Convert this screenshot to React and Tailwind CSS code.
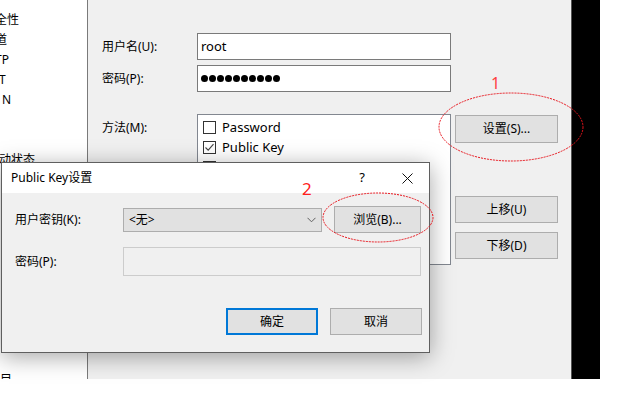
import React from 'react';

const font = "font-['Noto_Sans','Noto_Sans_CJK_SC',sans-serif]";

const Btn = ({ children, className = '' }) => (
    <div className={`flex items-center justify-center border border-[#adadad] bg-[#e1e1e1] text-[12px] text-black ${className}`}>
        {children}
    </div>
);

const Check = ({ checked, label }) => (
    <div className="flex h-[20px] items-center gap-[6px]">
        <div className="relative h-[13px] w-[13px] border border-[#333] bg-white">
            {checked && (
                <svg className="absolute left-[1px] top-[1px]" width="9" height="9" viewBox="0 0 9 9">
                    <path d="M0.5 4.5 L3.2 7.2 L8.5 1.2" fill="none" stroke="#444" strokeWidth="1.1" />
                </svg>
            )}
        </div>
        <span className="text-[13px] leading-none">{label}</span>
    </div>
);

// Left tree: only the clipped tails are visible
const TreePanel = () => (
    <div className="relative h-full w-[88px] overflow-hidden border-r border-[#7a7a7a] bg-white text-[12px]">
        <div className="flex flex-col pt-[10px] leading-[20px]">
            <span className="-ml-[17px] whitespace-nowrap">安全性</span>
            <span className="-ml-[17px] whitespace-nowrap">隧道</span>
            <span className="-ml-[5px] whitespace-nowrap">TP</span>
            <span className="-ml-[1px] whitespace-nowrap">T</span>
            <span className="ml-[2px] whitespace-nowrap">N</span>
            <span className="h-[20px]" />
            <span className="h-[20px]" />
            <span className="-ml-[1px] whitespace-nowrap">动状态</span>
        </div>
        <span className="absolute left-0 top-[373px] whitespace-nowrap text-[12px] leading-[14px]">目</span>
    </div>
);

const MainForm = () => (
    <div className="relative h-full w-[483px] bg-[#f0f0f0] pl-[14px] pt-[33px]">
        <div className="flex items-center">
            <span className="w-[95px] text-[12px]">用户名(U):</span>
            <div className="flex h-[27px] w-[254px] items-center border border-[#7a7a7a] bg-white pl-[3px] text-[13px]">root</div>
        </div>
        <div className="mt-[5px] flex items-center">
            <span className="w-[95px] text-[12px]">密码(P):</span>
            <div className="flex h-[27px] w-[254px] items-center gap-[1px] border border-[#7a7a7a] bg-white pl-[3px]">
                {Array.from({ length: 10 }).map((_, i) => (
                    <span key={i} className="h-[7px] w-[7px] rounded-full bg-black" />
                ))}
            </div>
        </div>
        <div className="mt-[22px] flex items-start">
            <span className="mt-[5px] w-[95px] text-[12px]">方法(M):</span>
            <div className="h-[151px] w-[254px] border border-[#828790] bg-white pl-[5px] pt-[2px]">
                <Check label="Password" />
                <Check checked label="Public Key" />
                <Check label="Keyboard Interactive" />
            </div>
            <div className="ml-[4px] flex flex-col">
                <Btn className="mt-[1px] h-[28px] w-[103px]">设置(S)...</Btn>
                <Btn className="mt-[53px] h-[27px] w-[103px]">上移(U)</Btn>
                <Btn className="mt-[9px] h-[27px] w-[103px]">下移(D)</Btn>
            </div>
        </div>
    </div>
);

const Dialog = () => (
    <div className="absolute left-[1px] top-[162px] flex h-[191px] w-[429px] flex-col border border-[#5f5f5f] bg-[#f0f0f0] shadow-[0_4px_22px_rgba(0,0,0,0.35)]">
        <div className="flex h-[30px] items-center bg-white pl-[9px] text-[12px]">
            <span className="flex-1">Public Key设置</span>
            <span className="mr-[37px] text-[13px]">?</span>
            <svg className="mr-[16px]" width="11" height="11" viewBox="0 0 11 11">
                <path d="M0.5 0.5 L10.5 10.5 M10.5 0.5 L0.5 10.5" stroke="#111" strokeWidth="1" />
            </svg>
        </div>
        <div className="flex flex-col pl-[13px] pr-[7px] pt-[13px]">
            <div className="flex items-center">
                <span className="w-[108px] text-[12px]">用户密钥(K):</span>
                <div className="flex h-[24px] w-[199px] items-center justify-between border border-[#adadad] bg-[#e1e1e1] pl-[5px] pr-[5px] text-[12px]">
                    <span>&lt;无&gt;</span>
                    <svg width="9" height="6" viewBox="0 0 9 6">
                        <path d="M0.5 0.8 L4.5 4.8 L8.5 0.8" fill="none" stroke="#606060" strokeWidth="1" />
                    </svg>
                </div>
                <Btn className="ml-[12px] h-[27px] w-[87px]">浏览(B)...</Btn>
            </div>
            <div className="mt-[14px] flex items-center">
                <span className="w-[108px] text-[12px]">密码(P):</span>
                <div className="h-[29px] w-[298px] border border-[#cccccc] bg-[#f0f0f0]" />
            </div>
            <div className="mt-[32px] flex justify-end gap-[12px]">
                <div className="flex h-[27px] w-[92px] items-center justify-center border-2 border-[#0078d7] bg-[#e1e1e1] text-[12px]">确定</div>
                <Btn className="h-[27px] w-[92px]">取消</Btn>
            </div>
        </div>
    </div>
);

const Annotations = () => (
    <>
        <svg className="pointer-events-none absolute left-0 top-0" width="631" height="395">
            <ellipse cx="511" cy="127" rx="72" ry="34" fill="none" stroke="#e8141c" strokeWidth="1" strokeDasharray="2 1" />
            <ellipse cx="378" cy="217.5" rx="55" ry="24.5" fill="none" stroke="#e8141c" strokeWidth="1" strokeDasharray="2 1" />
        </svg>
        <span className="absolute left-[491px] top-[74px] text-[16px] leading-[18px] text-[#ff4040]">1</span>
        <span className="absolute left-[302px] top-[179px] text-[17px] leading-[20px] text-[#ff2020]">2</span>
    </>
);

export default function App() {
    return (
        <div className={`relative h-[395px] w-[631px] overflow-hidden bg-white text-black ${font}`}>
            <div className="flex h-[379px] w-[600px]">
                <TreePanel />
                <MainForm />
                <div className="h-full w-[29px] border-l border-[#555] bg-black" />
            </div>
            <Dialog />
            <Annotations />
        </div>
    );
}
